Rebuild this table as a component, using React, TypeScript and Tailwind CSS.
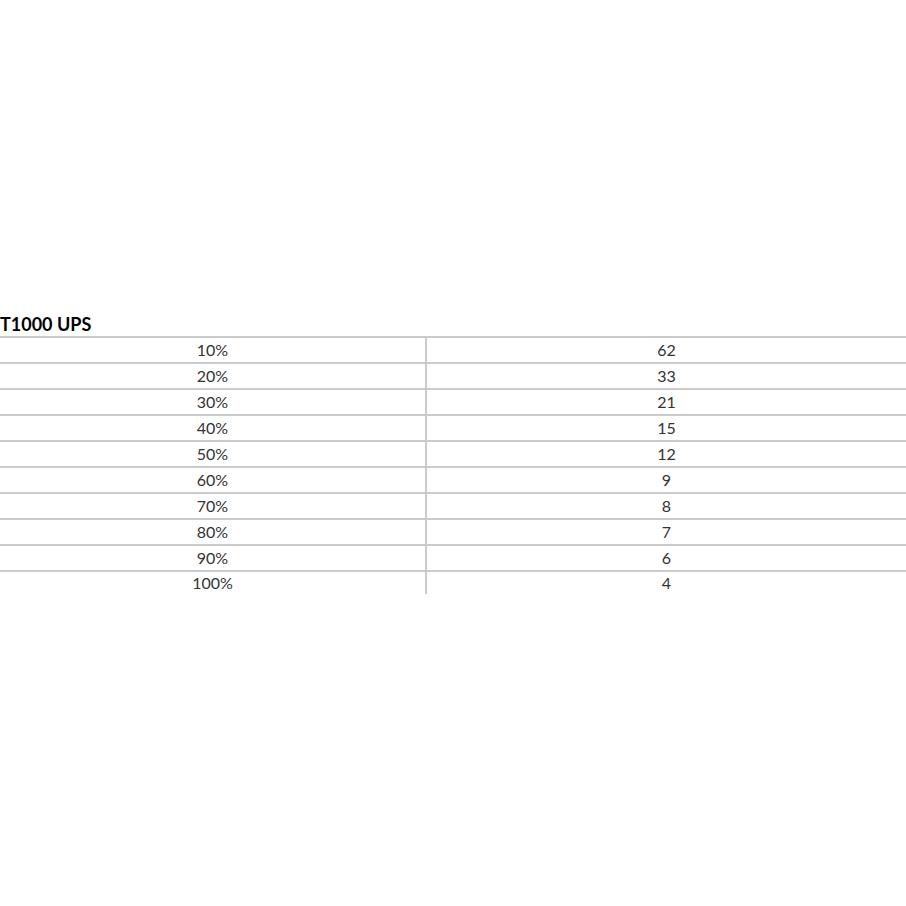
const ROWS = [
  ["10%", "62"],
  ["20%", "33"],
  ["30%", "21"],
  ["40%", "15"],
  ["50%", "12"],
  ["60%", "9"],
  ["70%", "8"],
  ["80%", "7"],
  ["90%", "6"],
  ["100%", "4"],
]

export default function App() {
  return (
    <div className="h-[906px] w-[906px] bg-white pt-[312px] font-['Lato',sans-serif] text-[#333]">
      <h3 className="h-[24px] text-[18px] font-bold leading-[24px] text-black">T1000 UPS</h3>
      <table className="w-full border-collapse">
        <tbody>
          {ROWS.map(([load, mins], i) => {
            const last = i === ROWS.length - 1
            const cell = `p-0 align-top text-center text-[16px] font-normal ${last ? "leading-[22px]" : "leading-[24px]"}`
            return (
              <tr key={load} className="border-t-2 border-[#cbcbcb]">
                <td className={`w-[426px] border-r-2 border-[#cbcbcb] ${cell}`}>{load}</td>
                <td className={cell}>{mins}</td>
              </tr>
            )
          })}
        </tbody>
      </table>
    </div>
  )
}
